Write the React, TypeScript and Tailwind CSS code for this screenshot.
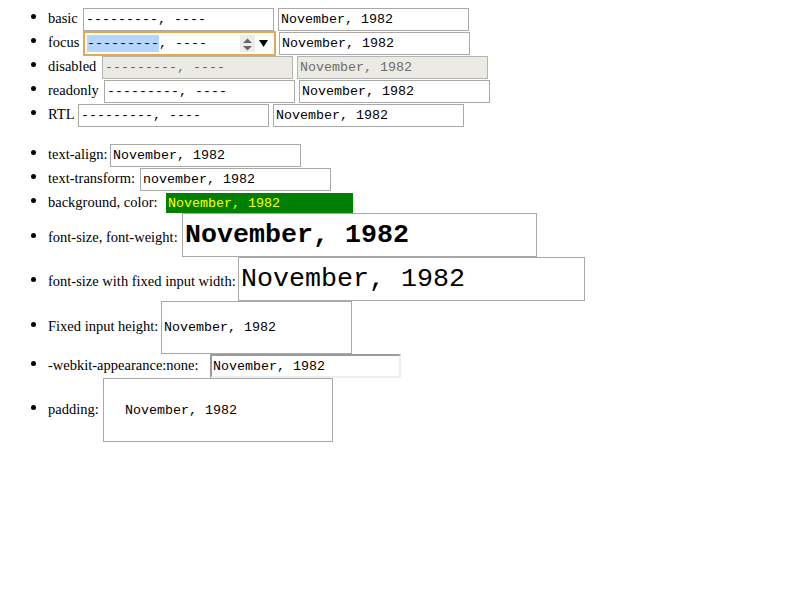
import React from "react";

const mono = "[font-family:'Liberation_Mono',monospace]";

function Bullet() {
  return (
    <span className="w-[40px] shrink-0 pl-[23px]">
      <span className="inline-block w-[5px] h-[5px] rounded-full bg-black mb-[4px]" />
    </span>
  );
}

function Row({ h, w, label, children }: { h: string; w: string; label: string; children: React.ReactNode }) {
  return (
    <div className={`flex items-baseline ${h}`}>
      <Bullet />
      <span className={`shrink-0 whitespace-nowrap ${w}`}>{label}</span>
      {children}
    </div>
  );
}

function Field({ className = "", children }: { className?: string; children: React.ReactNode }) {
  return (
    <div className={`flex items-center shrink-0 whitespace-pre text-[13.333px] ${mono} ${className}`}>
      {children}
    </div>
  );
}

const base = "w-[191px] h-[23px] border border-[#a9a9a9] bg-white px-[2px] text-black";
const disabled = "w-[191px] h-[23px] border border-[#b3b3b3] bg-[#ebebe4] px-[2px] text-[#6d6d6d]";

export default function App() {
  return (
    <div className="min-h-screen w-full bg-white pl-[8px] pt-[8px] [font-family:'Liberation_Serif',serif] text-[14.5px] leading-[normal] text-black">
      <div className="flex flex-col">
        <Row h="h-[24px]" w="w-[35px]" label="basic">
          <Field className={base}>---------, ----</Field>
          <Field className={`${base} ml-[4px]`}>November, 1982</Field>
        </Row>
        <Row h="h-[24px]" w="w-[36px]" label="focus">
          <Field className="w-[191px] h-[23px] border border-[#a9a9a9] bg-white pl-[2px] pr-[6px] text-black outline-2 outline-[#e2a94f] outline-offset-[-1px]">
            <span className="bg-[#b4d5fe] h-[17px] leading-[17px]">---------</span>
            <span>, ----</span>
            <span className="flex-1" />
            <span className="w-[15px] h-[17px] bg-[#ececec] flex items-center justify-center">
              <svg width="15" height="17" viewBox="0 0 15 17">
                <polygon points="3,8 12,8 7.5,3.5" fill="#666" />
                <polygon points="3,11 12,11 7.5,15.5" fill="#666" />
              </svg>
            </span>
            <svg className="ml-[4px]" width="9" height="7" viewBox="0 0 9 7">
              <polygon points="0,0 9,0 4.5,7" fill="#000" />
            </svg>
          </Field>
          <Field className={`${base} ml-[4px]`}>November, 1982</Field>
        </Row>
        <Row h="h-[24px]" w="w-[54px]" label="disabled">
          <Field className={disabled}>---------, ----</Field>
          <Field className={`${disabled} ml-[4px]`}>November, 1982</Field>
        </Row>
        <Row h="h-[24px]" w="w-[56px]" label="readonly">
          <Field className={base}>---------, ----</Field>
          <Field className={`${base} ml-[4px]`}>November, 1982</Field>
        </Row>
        <Row h="h-[24px]" w="w-[30px]" label="RTL">
          <Field className={base}>---------, ----</Field>
          <Field className={`${base} ml-[4px]`}>November, 1982</Field>
        </Row>
      </div>

      <div className="flex flex-col mt-[16px]">
        <Row h="h-[24px]" w="w-[62px]" label="text-align:">
          <Field className={base}>November, 1982</Field>
        </Row>
        <Row h="h-[24px]" w="w-[92px]" label="text-transform:">
          <Field className={base}>november, 1982</Field>
        </Row>
        <Row h="h-[21px]" w="w-[118px]" label="background, color:">
          <Field className="w-[187px] h-[20px] mt-[1px] bg-[#008000] px-[2px] text-[#ffff00]">November, 1982</Field>
        </Row>
        <Row h="h-[44px]" w="w-[134px]" label="font-size, font-weight:">
          <Field className="w-[355px] h-[44px] border border-[#a9a9a9] bg-white px-[2px] text-black !text-[26.667px] font-bold">
            November, 1982
          </Field>
        </Row>
        <Row h="h-[44px]" w="w-[190px]" label="font-size with fixed input width:">
          <Field className="w-[347px] h-[44px] border border-[#a9a9a9] bg-white px-[2px] text-black !text-[26.667px]">
            November, 1982
          </Field>
        </Row>
        <Row h="h-[53px]" w="w-[113px]" label="Fixed input height:">
          <Field className="w-[191px] h-[53px] border border-[#a9a9a9] bg-white px-[2px] text-black">November, 1982</Field>
        </Row>
        <Row h="h-[24px]" w="w-[162px]" label="-webkit-appearance:none:">
          <Field className="w-[191px] h-[24px] border-2 border-t-[#9a9a9a] border-l-[#9a9a9a] border-b-[#eeeeee] border-r-[#eeeeee] bg-white px-[1px] text-black">
            November, 1982
          </Field>
        </Row>
        <Row h="h-[64px]" w="w-[55px]" label="padding:">
          <Field className="w-[230px] h-[64px] border border-[#a9a9a9] bg-white pl-[21px] text-black">November, 1982</Field>
        </Row>
      </div>
    </div>
  );
}
